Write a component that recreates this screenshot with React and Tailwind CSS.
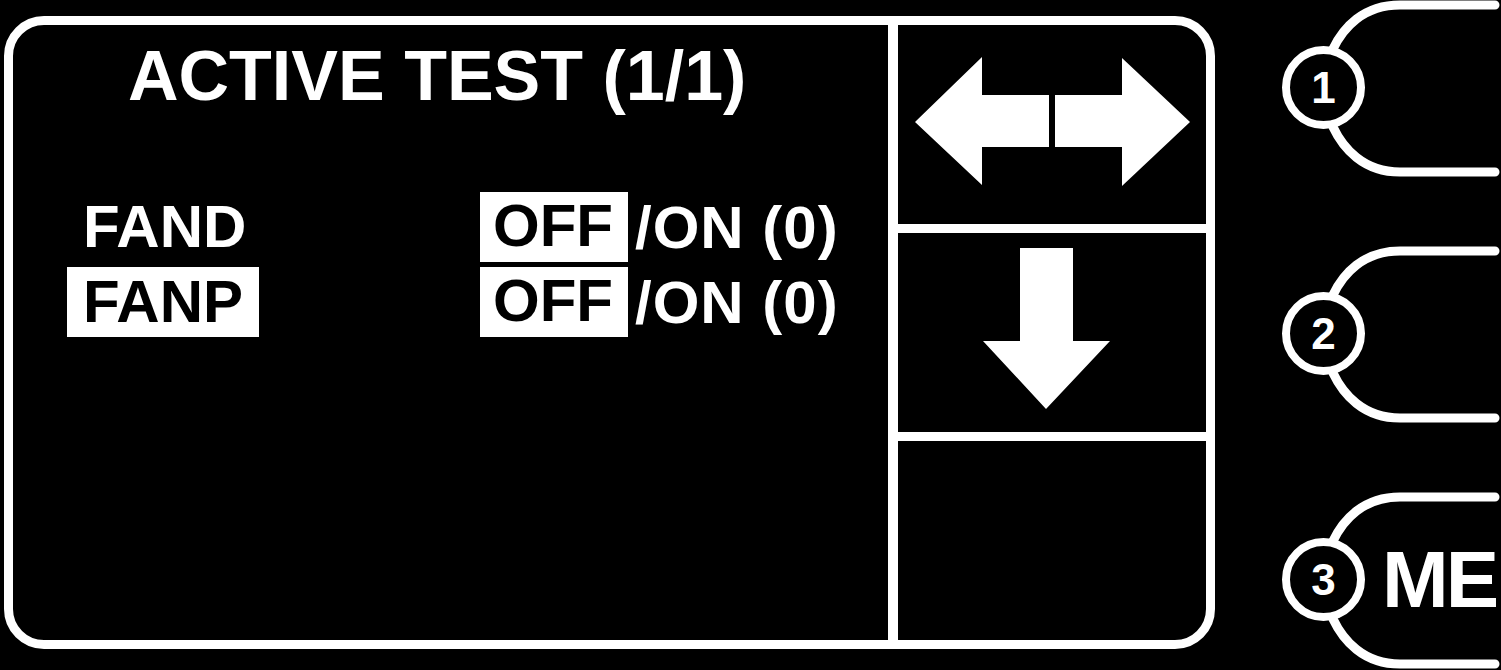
import React from 'react';

const font = "font-['Liberation_Sans',Arial,sans-serif]";

const Bracket = () => (
    <svg className="absolute inset-0" width="286" height="246" viewBox="0 0 286 246" fill="none">
        <path d="M118 49 C128 28 148 5 185 5 L280 5" stroke="white" strokeWidth="9" strokeLinecap="round" />
        <path d="M118 127 C128 148 148 172 185 172 L280 172" stroke="white" strokeWidth="9" strokeLinecap="round" />
    </svg>
);

const SideButton = ({ n, label }) => (
    <div className="relative w-[286px] h-[246px] shrink-0">
        <Bracket />
        <div className="relative flex items-center gap-[17px] pt-[46px] pl-[67px]">
            <div className="w-[83px] h-[83px] rounded-full border-[8px] border-white flex items-center justify-center text-[44px] font-bold leading-none text-white">
                {n}
            </div>
            {label && <span className="text-[80px] font-bold leading-none text-white tracking-[-3px]">{label}</span>}
        </div>
    </div>
);

const Row = ({ name, selected }) => (
    <div className="flex items-center h-[70px] pl-[54px] text-[60px] font-bold">
        <div className="w-[413px]">
            <span className={selected ? 'inline-block h-[70px] px-[16px] leading-[69px] bg-white text-black' : 'inline-block h-[70px] px-[16px] leading-[67px] text-white'}>
                {name}
            </span>
        </div>
        <span className="inline-block h-[70px] pl-[13px] pr-[15px] leading-[67px] bg-white text-black">OFF</span>
        <span className="ml-[7px] leading-[67px] text-white tracking-[1px]">/ON (0)</span>
    </div>
);

export default function App() {
    return (
        <div className={`w-[1501px] h-[670px] bg-black overflow-hidden flex items-start ${font}`}>
            {/* display */}
            <div className="mt-[16px] ml-[4px] w-[1211px] h-[633px] shrink-0 border-[9px] border-white rounded-[40px] flex overflow-hidden">
                <div className="flex-1 flex flex-col pt-[16px]">
                    <h1 className="h-[70px] pl-[115px] text-[70px] font-bold leading-none text-white">ACTIVE TEST (1/1)</h1>
                    <div className="mt-[81px] flex flex-col gap-[5px]">
                        <Row name="FAND" />
                        <Row name="FANP" selected />
                    </div>
                </div>
                <div className="w-[318px] border-l-[10px] border-white flex flex-col">
                    <div className="flex-1">
                        <svg width="308" height="199" viewBox="0 0 308 199">
                            <polygon points="17,97 84,32 84,70 151,70 151,122 84,122 84,160" fill="white" />
                            <polygon points="157,70 224,70 224,33 292,97 224,161 224,122 157,122" fill="white" />
                        </svg>
                    </div>
                    <div className="flex-1 border-t-[9px] border-white">
                        <svg width="308" height="199" viewBox="0 0 308 199">
                            <polygon points="122,15 175,15 175,108 212,108 148,176 85,108 122,108" fill="white" />
                        </svg>
                    </div>
                    <div className="flex-1 border-t-[9px] border-white" />
                </div>
            </div>
            {/* soft keys */}
            <div className="flex flex-col">
                <SideButton n="1" />
                <SideButton n="2" />
                <SideButton n="3" label="ME" />
            </div>
        </div>
    );
}
